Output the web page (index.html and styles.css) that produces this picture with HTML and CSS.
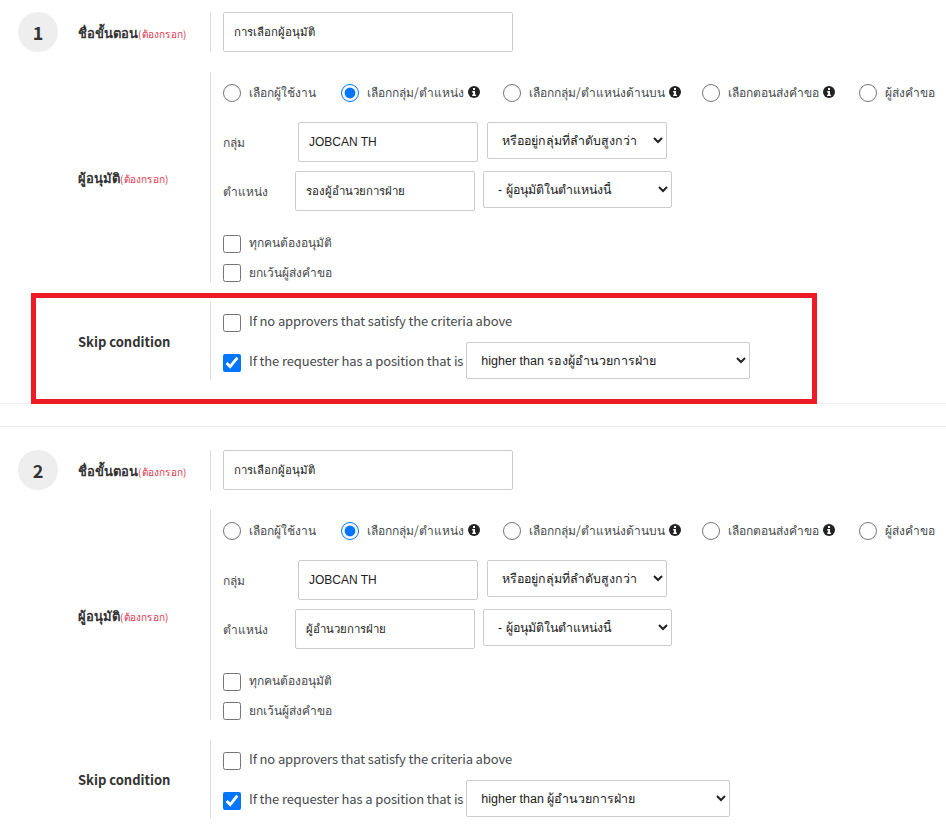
FILE: index.html
```html
<!doctype html>
<html>
    <head>
        <title>Approval steps</title>
        <link rel="stylesheet" href="styles.css">
    </head>
    <body>
        <main>
            <section class="step">
                <div class="step-number">1</div>
                <div class="step-body">
                    <div class="row row-name">
                        <div class="row-label thai-label">ชื่อขั้นตอน<span class="required">(ต้องกรอก)</span></div>
                        <div class="row-content">
                            <input class="text-input name-input thai-input" type="text" value="การเลือกผู้อนุมัติ">
                        </div>
                    </div>
                    <div class="row row-approver">
                        <div class="row-label thai-label">ผู้อนุมัติ<span class="required">(ต้องกรอก)</span></div>
                        <div class="row-content">
                            <div class="radio-row">
                                <label class="radio r1"><input type="radio" name="type1">เลือกผู้ใช้งาน</label>
                                <label class="radio r2"><input type="radio" name="type1" checked>เลือกกลุ่ม/ตำแหน่ง <svg class="info" viewBox="0 0 12 12"><circle cx="6" cy="6" r="6"/><rect x="5" y="2" width="2" height="2" fill="#fff"/><path d="M4.2 5h2.8v3.6h.9V10H4.2V8.6h.9V6.4h-.9z" fill="#fff"/></svg></label>
                                <label class="radio r3"><input type="radio" name="type1">เลือกกลุ่ม/ตำแหน่งด้านบน <svg class="info" viewBox="0 0 12 12"><circle cx="6" cy="6" r="6"/><rect x="5" y="2" width="2" height="2" fill="#fff"/><path d="M4.2 5h2.8v3.6h.9V10H4.2V8.6h.9V6.4h-.9z" fill="#fff"/></svg></label>
                                <label class="radio r4"><input type="radio" name="type1">เลือกตอนส่งคำขอ <svg class="info" viewBox="0 0 12 12"><circle cx="6" cy="6" r="6"/><rect x="5" y="2" width="2" height="2" fill="#fff"/><path d="M4.2 5h2.8v3.6h.9V10H4.2V8.6h.9V6.4h-.9z" fill="#fff"/></svg></label>
                                <label class="radio r5"><input type="radio" name="type1">ผู้ส่งคำขอ</label>
                            </div>
                            <div class="field-row group-row">
                                <span class="field-label group-label">กลุ่ม</span>
                                <input class="text-input field-input" type="text" value="JOBCAN TH">
                                <select class="select group-select"><option>หรืออยู่กลุ่มที่ลำดับสูงกว่า</option></select>
                            </div>
                            <div class="field-row position-row">
                                <span class="field-label position-label">ตำแหน่ง</span>
                                <input class="text-input field-input thai-input" type="text" value="รองผู้อำนวยการฝ่าย">
                                <select class="select position-select"><option>- ผู้อนุมัติในตำแหน่งนี้</option></select>
                            </div>
                            <label class="check check-first"><input type="checkbox">ทุกคนต้องอนุมัติ</label>
                            <label class="check check-second"><input type="checkbox">ยกเว้นผู้ส่งคำขอ</label>
                        </div>
                    </div>
                    <div class="row row-skip">
                        <div class="row-label">Skip condition</div>
                        <div class="row-content">
                            <label class="check skip-check skip-first"><input type="checkbox">If no approvers that satisfy the criteria above</label>
                            <div class="skip-second">
                                <label class="check skip-check"><input type="checkbox" checked>If the requester has a position that is</label>
                                <select class="select skip-select wide"><option>higher than รองผู้อำนวยการฝ่าย</option></select>
                            </div>
                        </div>
                    </div>
                </div>
            </section>

            <div class="highlight"></div>
            <div class="divider"></div>

            <section class="step">
                <div class="step-number">2</div>
                <div class="step-body">
                    <div class="row row-name">
                        <div class="row-label thai-label">ชื่อขั้นตอน<span class="required">(ต้องกรอก)</span></div>
                        <div class="row-content">
                            <input class="text-input name-input thai-input" type="text" value="การเลือกผู้อนุมัติ">
                        </div>
                    </div>
                    <div class="row row-approver">
                        <div class="row-label thai-label">ผู้อนุมัติ<span class="required">(ต้องกรอก)</span></div>
                        <div class="row-content">
                            <div class="radio-row">
                                <label class="radio r1"><input type="radio" name="type2">เลือกผู้ใช้งาน</label>
                                <label class="radio r2"><input type="radio" name="type2" checked>เลือกกลุ่ม/ตำแหน่ง <svg class="info" viewBox="0 0 12 12"><circle cx="6" cy="6" r="6"/><rect x="5" y="2" width="2" height="2" fill="#fff"/><path d="M4.2 5h2.8v3.6h.9V10H4.2V8.6h.9V6.4h-.9z" fill="#fff"/></svg></label>
                                <label class="radio r3"><input type="radio" name="type2">เลือกกลุ่ม/ตำแหน่งด้านบน <svg class="info" viewBox="0 0 12 12"><circle cx="6" cy="6" r="6"/><rect x="5" y="2" width="2" height="2" fill="#fff"/><path d="M4.2 5h2.8v3.6h.9V10H4.2V8.6h.9V6.4h-.9z" fill="#fff"/></svg></label>
                                <label class="radio r4"><input type="radio" name="type2">เลือกตอนส่งคำขอ <svg class="info" viewBox="0 0 12 12"><circle cx="6" cy="6" r="6"/><rect x="5" y="2" width="2" height="2" fill="#fff"/><path d="M4.2 5h2.8v3.6h.9V10H4.2V8.6h.9V6.4h-.9z" fill="#fff"/></svg></label>
                                <label class="radio r5"><input type="radio" name="type2">ผู้ส่งคำขอ</label>
                            </div>
                            <div class="field-row group-row">
                                <span class="field-label group-label">กลุ่ม</span>
                                <input class="text-input field-input" type="text" value="JOBCAN TH">
                                <select class="select group-select"><option>หรืออยู่กลุ่มที่ลำดับสูงกว่า</option></select>
                            </div>
                            <div class="field-row position-row">
                                <span class="field-label position-label">ตำแหน่ง</span>
                                <input class="text-input field-input thai-input" type="text" value="ผู้อำนวยการฝ่าย">
                                <select class="select position-select"><option>- ผู้อนุมัติในตำแหน่งนี้</option></select>
                            </div>
                            <label class="check check-first"><input type="checkbox">ทุกคนต้องอนุมัติ</label>
                            <label class="check check-second"><input type="checkbox">ยกเว้นผู้ส่งคำขอ</label>
                        </div>
                    </div>
                    <div class="row row-skip">
                        <div class="row-label">Skip condition</div>
                        <div class="row-content">
                            <label class="check skip-check skip-first"><input type="checkbox">If no approvers that satisfy the criteria above</label>
                            <div class="skip-second">
                                <label class="check skip-check"><input type="checkbox" checked>If the requester has a position that is</label>
                                <select class="select skip-select narrow"><option>higher than ผู้อำนวยการฝ่าย</option></select>
                            </div>
                        </div>
                    </div>
                </div>
            </section>
        </main>
    </body>
</html>
```

FILE: styles.css
```css
html, body {
    overflow: hidden;
}

body {
    margin: 0;
    height: 832px;
    background: #fff;
    color: #464a4c;
    font-family: "Noto Sans CJK JP", "Noto Sans", sans-serif;
    font-size: 12px;
}

main {
    position: relative;
    padding-top: 12px;
}

.step {
    display: flex;
    padding-left: 18px;
}

.step-number {
    flex: none;
    width: 40px;
    height: 40px;
    margin-right: 20px;
    border-radius: 50%;
    background: #eee;
    color: #333;
    font-size: 18px;
    font-weight: 700;
    line-height: 40px;
    text-align: center;
}

.step-body {
    flex: 1;
    min-width: 0;
}

.row {
    display: flex;
    align-items: center;
}

.row-label {
    flex: none;
    width: 132px;
    color: #333;
    font-size: 13px;
    font-weight: 700;
}

.thai-label {
    padding-top: 2px;
}

.required {
    color: #e0334a;
    font-size: 10px;
    font-weight: 400;
    letter-spacing: 0.2px;
}

.row-content {
    flex: 1;
    min-width: 0;
    border-left: 1px solid #ddd;
    padding-left: 12px;
}

.row-name {
    height: 40px;
    margin-bottom: 20px;
}

.row-approver {
    height: 210px;
    margin-bottom: 20px;
}

.row-approver .row-content {
    height: 210px;
}

.row-skip {
    height: 78px;
}

.row-skip .row-content {
    height: 78px;
}

input[type="radio"],
input[type="checkbox"] {
    flex: none;
    width: 18px;
    height: 18px;
    margin: 0 8px 0 0;
}

.text-input,
.select {
    box-sizing: border-box;
    border: 1px solid #ccc;
    border-radius: 2px;
    background: #fff;
    color: #222;
    font-family: "Liberation Sans", Arial, sans-serif;
}

.text-input {
    height: 40px;
    padding: 0 10px;
    font-size: 12px;
}

.thai-input {
    font-size: 11.4px;
}

.name-input {
    width: 290px;
}

.field-input {
    width: 180px;
}

.select {
    height: 37px;
    padding: 0 10px;
    font-size: 12.4px;
}

.radio-row {
    display: flex;
    align-items: center;
    height: 18px;
    padding-top: 11px;
    white-space: nowrap;
}

.radio {
    display: flex;
    align-items: center;
    flex: none;
}

.radio input[type="radio"] {
    margin-top: 2px;
}

.r1 { width: 118px; }
.r2 { width: 162px; }
.r3 { width: 199px; }
.r4 { width: 157px; }

.info {
    width: 12px;
    height: 12px;
    margin-left: 4px;
    fill: #222;
}

.field-row {
    display: flex;
    align-items: center;
    height: 40px;
}

.group-row {
    margin-top: 21px;
}

.position-row {
    margin-top: 9px;
}

.group-label {
    width: 75px;
}

.position-label {
    width: 72px;
}

.group-select {
    align-self: flex-start;
    width: 180px;
    margin-left: 9px;
}

.position-select {
    align-self: flex-start;
    width: 189px;
    margin-left: 8px;
}

.check {
    display: flex;
    align-items: center;
    height: 18px;
    white-space: nowrap;
}

.check input[type="checkbox"] {
    margin-top: 2px;
}

.check-first {
    margin-top: 22px;
}

.check-first input[type="checkbox"] {
    margin-top: 4px;
}

.check-second {
    margin-top: 12px;
}

.skip-check {
    font-size: 13px;
    letter-spacing: -0.13px;
}

.skip-check input[type="checkbox"] {
    margin-top: 5px;
}

.skip-first {
    padding-top: 9px;
}

.skip-first input[type="checkbox"] {
    margin-top: 6px;
}

.skip-second {
    display: flex;
    align-items: center;
    margin-top: 13px;
}

.skip-second .check {
    margin-bottom: 1px;
}

.skip-select {
    margin-left: 3px;
    font-size: 12.5px;
}

.wide {
    width: 284px;
}

.narrow {
    width: 264px;
}

.divider {
    margin: 23px 0;
    height: 22px;
    border-top: 1px solid #eee;
    border-bottom: 1px solid #eee;
}

/* annotation drawn on top of the screenshot */
.highlight {
    position: absolute;
    left: 31px;
    top: 293px;
    width: 776px;
    height: 101px;
    border: 5px solid #ed1c24;
}
```
